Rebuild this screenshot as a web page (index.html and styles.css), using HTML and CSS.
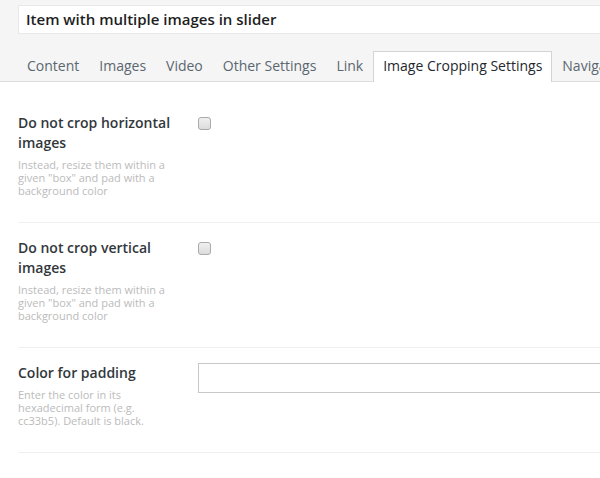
FILE: index.html
```html
<!DOCTYPE html>
<html lang="en">
<head>
  <meta charset="UTF-8">
  <title>Image Cropping Settings</title>
  <link rel="stylesheet" href="styles.css">
</head>
<body>
  <div class="header">
    <div class="title-box">Item with multiple images in slider</div>
    <ul class="tabs">
      <li class="tab">Content</li>
      <li class="tab">Images</li>
      <li class="tab">Video</li>
      <li class="tab">Other Settings</li>
      <li class="tab">Link</li>
      <li class="tab active">Image Cropping Settings</li>
      <li class="tab">Navigation</li>
    </ul>
  </div>

  <div class="settings">
    <div class="setting-row">
      <div class="setting-label">
        <label for="noCropH">Do not crop horizontal images</label>
        <p class="desc">Instead, resize them within a given "box" and pad with a background color</p>
      </div>
      <div class="setting-field">
        <input type="checkbox" id="noCropH" class="check">
      </div>
    </div>
    <div class="setting-row">
      <div class="setting-label">
        <label for="noCropV">Do not crop vertical images</label>
        <p class="desc">Instead, resize them within a given "box" and pad with a background color</p>
      </div>
      <div class="setting-field">
        <input type="checkbox" id="noCropV" class="check">
      </div>
    </div>
    <div class="setting-row">
      <div class="setting-label">
        <label for="padColor">Color for padding</label>
        <p class="desc">Enter the color in its hexadecimal form (e.g. cc33b5). Default is black.</p>
      </div>
      <div class="setting-field">
        <input type="text" id="padColor" class="text-input">
      </div>
    </div>
  </div>
</body>
</html>
```

FILE: styles.css
```css
body {
  font-family: 'Open Sans', 'DejaVu Sans', sans-serif;
  margin: 0;
  padding: 0;
  width: 600px;
  overflow: hidden;
  background-color: #fff;
  color: #32373c;
}
.header {
  background-color: #f5f5f5;
  padding: 5px 0 0 18px;
  border-bottom: 1px solid #ddd;
}
.title-box {
  width: 640px;
  height: 29px;
  box-sizing: border-box;
  background-color: #fff;
  border: 1px solid #e8e8e8;
  padding: 0 7px;
  font-size: 15px;
  font-weight: 600;
  line-height: 27px;
  color: #1e1e1e;
  white-space: nowrap;
}
.tabs {
  list-style: none;
  margin: 17px 0 -1px -1px;
  padding: 0;
  display: flex;
  white-space: nowrap;
}
.tab {
  padding: 4px 9px 5px;
  border: 1px solid transparent;
  border-bottom: none;
  font-size: 14px;
  line-height: 20px;
  color: #5b6770;
  flex-shrink: 0;
}
.tab.active {
  background-color: #fff;
  border-color: #d4d4d4;
  color: #23282d;
  padding-bottom: 6px;
}
.settings {
  padding: 16px 0 0 18px;
}
.setting-row {
  display: flex;
  padding: 15px 0 25px;
  border-bottom: 1px solid #f0f0f0;
}
.setting-label {
  width: 180px;
  flex-shrink: 0;
}
.setting-label label {
  display: block;
  font-size: 14px;
  font-weight: 600;
  line-height: 20px;
  color: #32373c;
  padding-right: 10px;
}
.desc {
  margin: 5px 0 0;
  font-size: 11px;
  line-height: 13px;
  color: #bbb;
  padding-right: 30px;
}
.setting-field {
  flex: 1;
}
.check {
  -webkit-appearance: none;
  appearance: none;
  display: block;
  width: 13px;
  height: 13px;
  margin: 4px 0 0;
  box-sizing: border-box;
  border: 1px solid #aaa;
  border-radius: 3px;
  background: linear-gradient(#f0f0f0, #dcdcdc);
}
.text-input {
  display: block;
  width: 460px;
  height: 30px;
  margin: 0;
  box-sizing: border-box;
  border: 1px solid #c8c8c8;
  background-color: #fff;
}
```
